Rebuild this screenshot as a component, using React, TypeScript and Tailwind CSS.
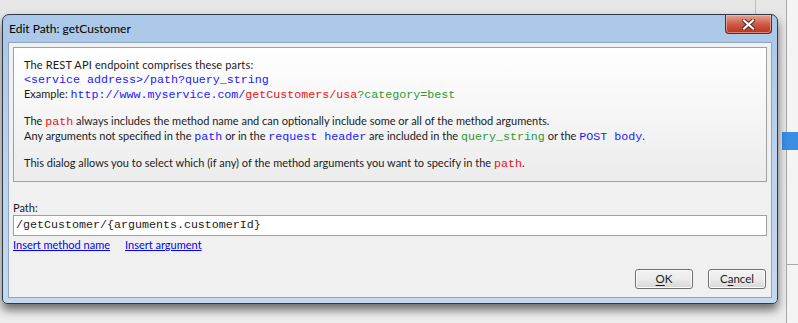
import React from "react";

const SANS = "font-['Segoe_UI',Lato,'Liberation_Sans',sans-serif]";
const MONO = "font-['Liberation_Mono','Courier_New',monospace] text-[11.67px]";

const Code = ({ color, children }: { color: string; children: React.ReactNode }) => (
  <span className={`${MONO} ${color}`}>{children}</span>
);

const BLUE = "text-[#1a1aff]";
const RED = "text-[#f01010]";
const GREEN = "text-[#2f9a2f]";

function InfoBox() {
  return (
    <div className="mx-[4px] mt-[4px] border border-[#a0a0a0] bg-gradient-to-b from-white to-[#ececec] pl-[10px] pr-2 pt-[10px] pb-[10px] text-[11px] leading-[14px] text-[#1b1b1b]">
      <div className="tracking-[0.15px]">The REST API endpoint comprises these parts:</div>
      <div>
        <Code color={BLUE}>&lt;service address&gt;/path?query_string</Code>
      </div>
      <div>
        Example: <Code color={BLUE}>http://www.myservice.com/</Code>
        <Code color={RED}>getCustomers/usa</Code>
        <Code color={GREEN}>?category=best</Code>
      </div>
      <div className="mt-[12px]">
        The <Code color={RED}>path</Code> always includes the method name and can optionally include some
        or all of the method arguments.
      </div>
      <div>
        Any arguments not specified in the <Code color={BLUE}>path</Code> or in the{" "}
        <Code color={BLUE}>request header</Code> are included in the{" "}
        <Code color={GREEN}>query_string</Code> or the <Code color={BLUE}>POST body</Code>.
      </div>
      <div className="mt-[12px]">
        This dialog allows you to select which (if any) of the method arguments you want to specify in
        the <Code color={RED}>path</Code>.
      </div>
    </div>
  );
}

function DialogButton({ label, mnemonic }: { label: string; mnemonic: number }) {
  return (
    <button className="flex h-[20px] w-[58px] items-center justify-center rounded-[3px] border border-[#707070] bg-gradient-to-b from-[#f2f2f2] via-[#ebebeb] to-[#d6d6d6] text-[11.5px] text-[#1b1b1b] shadow-[inset_0_0_0_1px_#fcfcfc]">
      {label.slice(0, mnemonic)}
      <span className="underline underline-offset-2">{label[mnemonic]}</span>
      {label.slice(mnemonic + 1)}
    </button>
  );
}

function CloseButton() {
  return (
    <div className="flex h-[19px] w-[47px] items-center justify-center rounded-b-[4px] border border-t-0 border-[#5c2b24] bg-gradient-to-b from-[#e3a497] via-[#cf5a45] to-[#b8321d] shadow-[inset_0_0_0_1px_rgba(255,210,200,0.5)]">
      <svg width="13" height="11" viewBox="0 0 13 11">
        <path d="M2 1.5 L11 9.5 M11 1.5 L2 9.5" stroke="#4a2a26" strokeWidth="4" strokeLinecap="square" />
        <path d="M2 1.5 L11 9.5 M11 1.5 L2 9.5" stroke="#ffffff" strokeWidth="2.2" strokeLinecap="square" />
      </svg>
    </div>
  );
}

export default function App() {
  return (
    <div className={`${SANS} relative flex h-[323px] w-[798px] overflow-hidden bg-gradient-to-b from-[#e6e6e6] to-[#ededed]`}>
      {/* background window pieces on the right */}
      <div className="absolute left-[755px] top-0 h-[14px] w-px bg-[#bdbdbd]" />
      <div className="absolute left-[786px] top-0 h-full w-px bg-[#a8a8a8]" />
      <div className="absolute left-[787px] top-0 h-full w-[11px] bg-[#f4f4f4]" />
      <div className="absolute left-[782px] top-[132px] h-[18px] w-[16px] bg-[#3a8ee6]" />
      <div className="absolute left-[787px] top-[264px] h-px w-[11px] bg-[#a8a8a8]" />

      <div className="relative z-10 ml-[2px] mt-[14px] flex h-[290px] w-[776px] flex-col rounded-t-[7px] rounded-b-[5px] border border-[#2f3a46] bg-gradient-to-b from-[#a9c7e8] via-[#bcd3ec] to-[#c4d8ee] shadow-[0_6px_10px_rgba(0,0,0,0.55)]">
        <div className="flex h-[27px] items-start justify-between pl-[6px] pr-[5px]">
          <span className="mt-[6px] text-[12px] leading-[16px] text-black">Edit Path: getCustomer</span>
          <CloseButton />
        </div>
        <div className="mx-[5px] mb-[5px] flex flex-1 flex-col border border-[#8ea6c0] bg-[#f0f0f0]">
          <InfoBox />
          <div className="mt-[19px] px-[4px] text-[11px] leading-[14px] text-[#1b1b1b]">Path:</div>
          <div className="mx-[4px] flex h-[21px] items-center border border-[#a0a0a0] bg-white px-[2px]">
            <span className={`${MONO} text-[#1b1b1b]`}>/getCustomer/{"{arguments.customerId}"}</span>
          </div>
          <div className="mt-[1px] flex gap-[15px] px-[4px] text-[11px] leading-[16px] text-[#0000ff]">
            <a className="underline">Insert method name</a>
            <a className="underline">Insert argument</a>
          </div>
          <div className="mt-auto mb-[8px] flex justify-end gap-[15px] pr-[5px]">
            <DialogButton label="OK" mnemonic={0} />
            <DialogButton label="Cancel" mnemonic={1} />
          </div>
        </div>
      </div>
    </div>
  );
}
